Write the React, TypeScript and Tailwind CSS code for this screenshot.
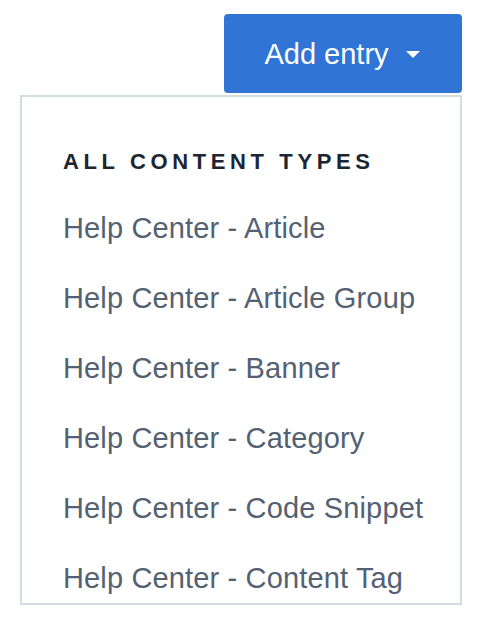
import React from 'react';

const contentTypes = [
  'Help Center - Article',
  'Help Center - Article Group',
  'Help Center - Banner',
  'Help Center - Category',
  'Help Center - Code Snippet',
  'Help Center - Content Tag',
];

export default function App() {
  return (
    <div className="w-[480px] h-[618px] bg-white overflow-hidden" style={{ fontFamily: '"Liberation Sans", Arial, sans-serif' }}>
      <div className="flex justify-end pt-[14px] pr-[18px]">
        <button className="flex items-center justify-center gap-[17px] w-[238px] h-[79px] pr-[2px] rounded-[4px] bg-[#3075d6] text-white text-[29px] leading-[32px]">
          <span>Add entry</span>
          <svg width="14" height="7" viewBox="0 0 14 7" className="mt-[1px]">
            <path d="M0 0 L14 0 L7 7 Z" fill="#ffffff" />
          </svg>
        </button>
      </div>

      <div className="ml-[20px] mt-[2px] w-[442px] h-[510px] border-2 border-[#d3dcdf] bg-white overflow-hidden">
        <div className="pl-[41px] pt-[53px] pb-[19px] text-[22px] leading-[24px] font-bold tracking-[0.21em] uppercase text-[#1b2632]">
          All content types
        </div>
        <ul>
          {contentTypes.map((t) => (
            <li key={t} className="flex items-center h-[70px] pl-[41px] text-[29px] leading-[32px] tracking-[0.15px] text-[#536172]">
              {t}
            </li>
          ))}
        </ul>
      </div>
    </div>
  );
}
